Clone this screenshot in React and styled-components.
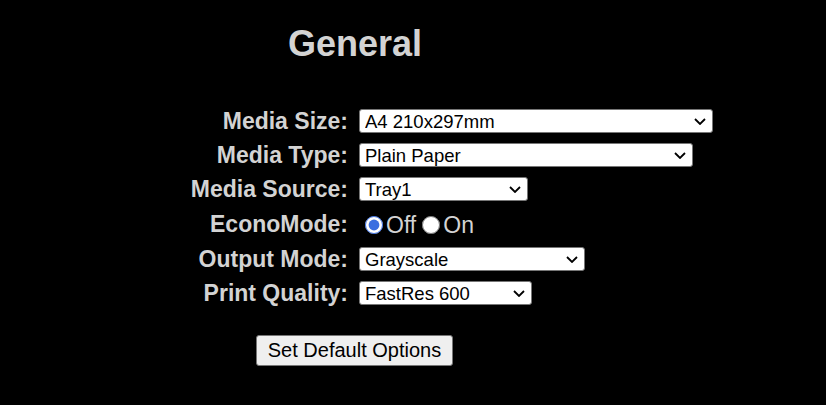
import React from "react";
import styled, { createGlobalStyle } from "styled-components";

const GlobalStyle = createGlobalStyle`
  body {
    margin: 0;
    background: #000;
    font-family: "Liberation Sans", Arial, sans-serif;
  }
`;

const settings = [
  { label: "Media Size:", value: "A4 210x297mm", width: 354 },
  { label: "Media Type:", value: "Plain Paper", width: 334 },
  { label: "Media Source:", value: "Tray1", width: 169 },
  { label: "EconoMode:", radio: true },
  { label: "Output Mode:", value: "Grayscale", width: 226 },
  { label: "Print Quality:", value: "FastRes 600", width: 173 },
];

// chevron like the one chrome draws on windows
const Chevron = () => (
  <ChevronIcon width="12" height="7" viewBox="0 0 12 7">
    <path d="M1 1l5 5 5-5" fill="none" stroke="#000" strokeWidth="1.8" />
  </ChevronIcon>
);

const App = () => {
  return (
    <>
      <GlobalStyle />
      <Page>
        <Title>General</Title>
        <Form>
          {settings.map((s) =>
            s.radio ? (
              <Row key={s.label}>
                <Label>{s.label}</Label>
                <Radios>
                  <Radio type="radio" name="econo" defaultChecked />
                  <RadioText>Off</RadioText>
                  <Radio type="radio" name="econo" />
                  <RadioText>On</RadioText>
                </Radios>
              </Row>
            ) : (
              <Row key={s.label}>
                <Label>{s.label}</Label>
                <SelectWrap $w={s.width}>
                  <Select defaultValue={s.value}>
                    <option>{s.value}</option>
                  </Select>
                  <Chevron />
                </SelectWrap>
              </Row>
            )
          )}
        </Form>
        <Button>Set Default Options</Button>
      </Page>
    </>
  );
};

const Page = styled.div`
  width: 826px;
  height: 405px;
  padding-top: 24px;
  box-sizing: border-box;
`;

const Title = styled.h1`
  margin: 0 0 0 288px;
  font-size: 36px;
  font-weight: bold;
  color: #d3d3d3;
  line-height: 40px;
`;

const Form = styled.div`
  display: grid;
  grid-template-columns: 172px auto;
  column-gap: 11px;
  row-gap: 10px;
  align-items: center;
  margin: 45px 0 0 176px;
`;

const Row = styled.div`
  display: contents;
`;

const Label = styled.div`
  text-align: right;
  font-size: 23px;
  font-weight: bold;
  color: #d3d3d3;
  line-height: 24px;
  white-space: nowrap;
`;

const SelectWrap = styled.div`
  position: relative;
  width: ${(p) => p.$w}px;
  height: 24px;
`;

const Select = styled.select`
  appearance: none;
  width: 100%;
  height: 24px;
  font-family: "Liberation Sans", Arial, sans-serif;
  font-size: 18.5px;
  color: #000;
  background: #fff;
  border: 1px solid #767676;
  border-radius: 3px;
  padding: 0 0 0 5px;
`;

const ChevronIcon = styled.svg`
  position: absolute;
  right: 7px;
  top: 9px;
  pointer-events: none;
`;

const Radios = styled.div`
  display: flex;
  align-items: center;
  height: 26px;
  padding-top: 2px;
  box-sizing: border-box;
`;

const Radio = styled.input`
  margin: 0 3px 0 6px;
  width: 18px;
  height: 18px;
  accent-color: #3b6fe0;
`;

const RadioText = styled.span`
  font-size: 23px;
  color: #d3d3d3;
`;

const Button = styled.button`
  display: block;
  margin: 30px 0 0 256px;
  height: 31px;
  width: 197px;
  font-family: "Liberation Sans", Arial, sans-serif;
  font-size: 20px;
  color: #000;
  background: #efefef;
  border: 1px solid #767676;
  border-radius: 3px;
  padding: 0;
`;

export default App;
